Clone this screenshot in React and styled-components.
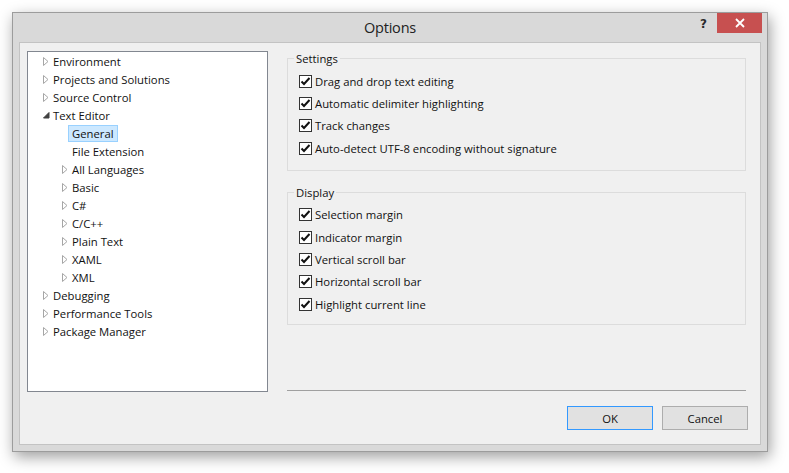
import React from 'react';
import styled, { createGlobalStyle, css } from 'styled-components';

const GlobalStyle = createGlobalStyle`
  html, body {
    margin: 0;
    padding: 0;
    background: #ffffff;
  }
  body {
    font-family: "Open Sans", "Noto Sans", "DejaVu Sans", sans-serif;
    font-size: 11.3px;
    color: #000;
  }
`;

const Page = styled.div`
  width: 789px;
  height: 473px;
  padding: 12px 0 0 12px;
  box-sizing: border-box;
`;

const Window = styled.div`
  width: 756px;
  height: 440px;
  box-sizing: border-box;
  border: 1px solid #9c9c9c;
  background: #d9d9d9;
  box-shadow: 2px 5px 14px rgba(0, 0, 0, 0.38);
  display: flex;
  flex-direction: column;
  padding: 0 6px 6px;
`;

const TitleBar = styled.div`
  height: 29px;
  display: grid;
  grid-template-columns: 1fr auto 1fr;
  align-items: start;
`;

const Title = styled.div`
  grid-column: 2;
  font-size: 14.5px;
  line-height: 29px;
  color: #222;
  letter-spacing: -0.2px;
`;

const Controls = styled.div`
  grid-column: 3;
  justify-self: end;
  display: flex;
  align-items: flex-start;
  margin-right: -1px;
`;

const HelpButton = styled.div`
  font-family: "DejaVu Sans", sans-serif;
  font-weight: bold;
  font-size: 12px;
  color: #2b2b2b;
  line-height: 20px;
  padding-top: 1px;
  margin-right: 10px;
`;

const CloseButton = styled.div`
  width: 45px;
  height: 20px;
  background: #c75050;
  display: flex;
  align-items: center;
  justify-content: center;
`;

const Client = styled.div`
  flex: 1;
  border: 1px solid #c3c3c3;
  background: #f0f0f0;
  display: flex;
  flex-direction: column;
  padding: 8px 12px 0 7px;
`;

const TopRow = styled.div`
  display: flex;
  gap: 19px;
  height: 341px;
`;

const Tree = styled.div`
  width: 241px;
  box-sizing: border-box;
  border: 1px solid #828790;
  background: #ffffff;
`;

const TreeRow = styled.div`
  height: 18px;
  display: flex;
  align-items: center;
  padding-left: ${(p) => 15 + p.$level * 19}px;
  color: #111;
  white-space: nowrap;
`;

const Expander = styled.span`
  width: 10px;
  height: 18px;
  display: inline-flex;
  align-items: center;
  flex-shrink: 0;
`;

const TreeLabel = styled.span`
  height: 17px;
  line-height: 15px;
  box-sizing: border-box;
  border: 1px solid transparent;
  padding: 0 3px;
  margin-left: -4px;
  ${(p) =>
    p.$selected &&
    css`
      background: #cce8ff;
      border-color: #99d1ff;
    `}
`;

const RightColumn = styled.div`
  flex: 1;
  display: flex;
  flex-direction: column;
  padding-right: 2px;
`;

const Group = styled.fieldset`
  margin: 0 0 14px;
  padding: 4px 0 ${(p) => p.$bottom}px 11px;
  border: 1px solid #dcdcdc;
  min-width: 0;
`;

const Legend = styled.legend`
  padding: 0 2px;
  margin-left: -5px;
  color: #111;
  line-height: 15px;
`;

const CheckRow = styled.label`
  height: 22.4px;
  display: flex;
  align-items: center;
  gap: 3px;
  color: #111;
`;

const Box = styled.span`
  width: 13px;
  height: 13px;
  box-sizing: border-box;
  border: 1px solid #333333;
  background: #ffffff;
  display: inline-flex;
  align-items: center;
  justify-content: center;
`;

const Separator = styled.div`
  margin-top: auto;
  height: 1px;
  background: #a0a0a0;
  margin-bottom: 1px;
`;

const Footer = styled.div`
  display: flex;
  justify-content: flex-end;
  gap: 9px;
  padding-top: 14px;
`;

const Button = styled.div`
  width: 86px;
  height: 24px;
  box-sizing: border-box;
  border: 1px solid ${(p) => (p.$default ? '#3399ff' : '#adadad')};
  background: #e1e1e1;
  display: flex;
  align-items: center;
  justify-content: center;
  color: #111;
`;

const CollapsedArrow = () => (
  <svg width="6" height="9" viewBox="0 0 6 9">
    <path d="M0.5 0.5 L5 4.5 L0.5 8.5 Z" fill="#fff" stroke="#a6a6a6" />
  </svg>
);

const ExpandedArrow = () => (
  <svg width="7" height="7" viewBox="0 0 7 7">
    <path d="M6 0.5 L6 6 L0.5 6 Z" fill="#404040" stroke="#404040" strokeLinejoin="round" />
  </svg>
);

const CheckMark = () => (
  <svg width="11" height="11" viewBox="0 0 11 11">
    <path d="M1.5 5.5 L4 8 L9.5 2" fill="none" stroke="#111" strokeWidth="2" />
  </svg>
);

const treeItems = [
  { label: 'Environment', level: 0, arrow: 'closed' },
  { label: 'Projects and Solutions', level: 0, arrow: 'closed' },
  { label: 'Source Control', level: 0, arrow: 'closed' },
  { label: 'Text Editor', level: 0, arrow: 'open' },
  { label: 'General', level: 1, selected: true },
  { label: 'File Extension', level: 1 },
  { label: 'All Languages', level: 1, arrow: 'closed' },
  { label: 'Basic', level: 1, arrow: 'closed' },
  { label: 'C#', level: 1, arrow: 'closed' },
  { label: 'C/C++', level: 1, arrow: 'closed' },
  { label: 'Plain Text', level: 1, arrow: 'closed' },
  { label: 'XAML', level: 1, arrow: 'closed' },
  { label: 'XML', level: 1, arrow: 'closed' },
  { label: 'Debugging', level: 0, arrow: 'closed' },
  { label: 'Performance Tools', level: 0, arrow: 'closed' },
  { label: 'Package Manager', level: 0, arrow: 'closed' },
];

const groups = [
  {
    title: 'Settings',
    bottom: 10,
    options: [
      'Drag and drop text editing',
      'Automatic delimiter highlighting',
      'Track changes',
      'Auto-detect UTF-8 encoding without signature',
    ],
  },
  {
    title: 'Display',
    bottom: 8,
    options: [
      'Selection margin',
      'Indicator margin',
      'Vertical scroll bar',
      'Horizontal scroll bar',
      'Highlight current line',
    ],
  },
];

const App = () => (
  <Page>
    <GlobalStyle />
    <Window>
      <TitleBar>
        <Title>Options</Title>
        <Controls>
          <HelpButton>?</HelpButton>
          <CloseButton>
            <svg width="10" height="10" viewBox="0 0 10 10">
              <path d="M1 1 L9 9 M9 1 L1 9" stroke="#fff" strokeWidth="1.8" />
            </svg>
          </CloseButton>
        </Controls>
      </TitleBar>
      <Client>
        <TopRow>
          <Tree>
            {treeItems.map((item) => (
              <TreeRow key={item.label} $level={item.level}>
                <Expander>
                  {item.arrow === 'closed' && <CollapsedArrow />}
                  {item.arrow === 'open' && <ExpandedArrow />}
                </Expander>
                <TreeLabel $selected={item.selected}>{item.label}</TreeLabel>
              </TreeRow>
            ))}
          </Tree>
          <RightColumn>
            {groups.map((group) => (
              <Group key={group.title} $bottom={group.bottom}>
                <Legend>{group.title}</Legend>
                {group.options.map((option) => (
                  <CheckRow key={option}>
                    <Box>
                      <CheckMark />
                    </Box>
                    {option}
                  </CheckRow>
                ))}
              </Group>
            ))}
            <Separator />
          </RightColumn>
        </TopRow>
        <Footer>
          <Button $default>OK</Button>
          <Button>Cancel</Button>
        </Footer>
      </Client>
    </Window>
  </Page>
);

export default App;
